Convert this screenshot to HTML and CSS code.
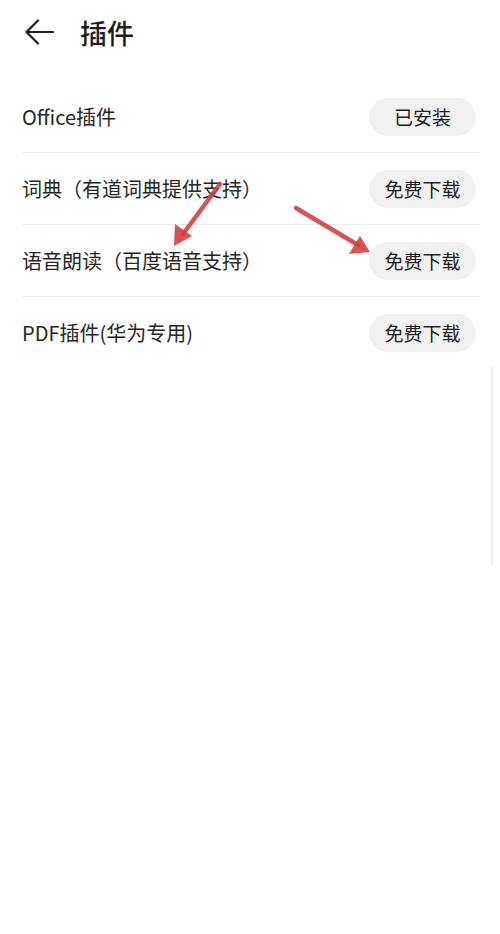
FILE: index.html
```html
<!DOCTYPE html>
<html lang="zh">
<head>
<meta charset="utf-8">
<link rel="stylesheet" href="styles.css">
</head>
<body>
<div class="page">
  <header class="topbar">
    <svg class="back" width="30" height="26" viewBox="0 0 30 26"><path d="M14 1.5 L2.5 13 L14 24.5 M2.5 13 H29" fill="none" stroke="#1e1e1e" stroke-width="2.2" stroke-linecap="round" stroke-linejoin="round"/></svg>
    <h1 class="title">插件</h1>
  </header>
  <ul class="list">
    <li class="row"><span class="label">Office插件</span><span class="btn">已安装</span></li>
    <li class="row"><span class="label">词典（有道词典提供支持）</span><span class="btn">免费下载</span></li>
    <li class="row"><span class="label">语音朗读（百度语音支持）</span><span class="btn">免费下载</span></li>
    <li class="row"><span class="label">PDF插件(华为专用)</span><span class="btn">免费下载</span></li>
  </ul>
  <svg class="arrows" width="500" height="300" viewBox="0 0 500 300">
    <g stroke="#d63a3b" stroke-width="4.5" stroke-linecap="round" fill="none" opacity="0.88">
      <line x1="220" y1="184" x2="183" y2="234"/>
      <line x1="296" y1="208" x2="358" y2="245"/>
    </g>
    <g fill="#d63a3b" opacity="0.88">
      <polygon points="174,246 175,224 192,236"/>
      <polygon points="370,252 349,254 360,236"/>
    </g>
  </svg>
  <div class="scrollbar"></div>
</div>
</body>
</html>
```
FILE: styles.css
```css
html, body {
  margin: 0;
  padding: 0;
  background: #fff;
}
body {
  font-family: "Noto Sans CJK SC", "Noto Sans", sans-serif;
  color: #222;
}
.page {
  position: relative;
  width: 500px;
  height: 934px;
  overflow: hidden;
}
.topbar {
  display: flex;
  align-items: center;
  height: 64px;
  padding-left: 24px;
  gap: 26px;
}
.back {
  display: block;
}
.title {
  margin: 0;
  font-size: 27px;
  font-weight: 500;
  color: #1e1e1e;
  line-height: 1;
}
.list {
  list-style: none;
  margin: 17px 0 0 0;
  padding: 0 20px 0 22px;
}
.row {
  display: flex;
  align-items: center;
  justify-content: space-between;
  height: 71px;
  border-bottom: 1px solid #ececec;
}
.row:last-child {
  border-bottom: none;
}
.label {
  font-size: 20px;
  color: #262626;
}
.btn {
  display: flex;
  align-items: center;
  justify-content: center;
  width: 107px;
  height: 38px;
  border-radius: 19px;
  background: #f1f1f1;
  font-size: 19px;
  font-weight: 400;
  color: #1e1e1e;
  margin-right: 4px;
}
.arrows {
  position: absolute;
  left: 0;
  top: 0;
}
.scrollbar {
  position: absolute;
  left: 491px;
  top: 367px;
  width: 2px;
  height: 198px;
  background: #eeeeee;
}
```
